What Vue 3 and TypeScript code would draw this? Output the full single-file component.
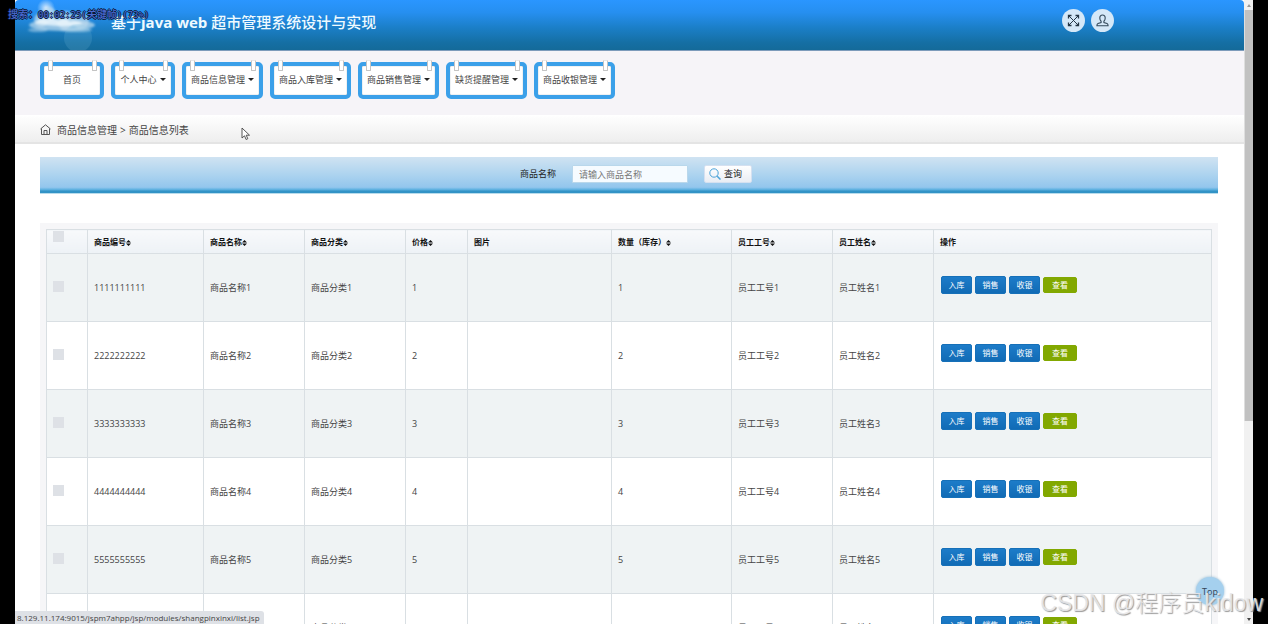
<script setup lang="ts">
import { ref } from 'vue'

interface NavItem { label: string; menu: boolean }
interface Column { label: string; key: string; sortable: boolean }

const nav: NavItem[] = [
  { label: '首页', menu: false },
  { label: '个人中心', menu: true },
  { label: '商品信息管理', menu: true },
  { label: '商品入库管理', menu: true },
  { label: '商品销售管理', menu: true },
  { label: '缺货提醒管理', menu: true },
  { label: '商品收银管理', menu: true },
]

const columns: Column[] = [
  { label: '商品编号', key: 'code', sortable: true },
  { label: '商品名称', key: 'name', sortable: true },
  { label: '商品分类', key: 'kind', sortable: true },
  { label: '价格', key: 'price', sortable: true },
  { label: '图片', key: 'image', sortable: false },
  { label: '数量（库存）', key: 'stock', sortable: true },
  { label: '员工工号', key: 'staff', sortable: true },
  { label: '员工姓名', key: 'person', sortable: true },
]

const rows = [1, 2, 3, 4, 5, 6].map((n) => ({
  id: n,
  code: String(n).repeat(10),
  name: `商品名称${n}`,
  kind: `商品分类${n}`,
  price: String(n),
  image: '',
  stock: String(n),
  staff: `员工工号${n}`,
  person: `员工姓名${n}`,
})) as Array<{ id: number } & Record<string, string | number>>

const actions = ['入库', '销售', '收银']
const keyword = ref('')
</script>

<template>
  <div class="stage">
    <main class="page">
      <header class="header">
        <svg class="cloud" width="90" height="50" viewBox="0 0 90 50" aria-hidden="true">
          <defs>
            <filter id="soft" x="-20%" y="-20%" width="140%" height="140%"><feGaussianBlur stdDeviation="1.2" /></filter>
            <radialGradient id="glow"><stop offset="0" stop-color="#fff" /><stop offset="1" stop-color="#fff" stop-opacity="0" /></radialGradient>
          </defs>
          <circle cx="25" cy="8" r="9" fill="url(#glow)" opacity=".8" />
          <g filter="url(#soft)" fill="#c3def0">
            <ellipse cx="41" cy="25" rx="33" ry="6" opacity=".7" />
            <circle cx="20" cy="20" r="7" opacity=".7" />
            <circle cx="28" cy="14" r="7" opacity=".7" />
            <circle cx="44" cy="20" r="9" opacity=".7" />
            <circle cx="60" cy="21" r="8" opacity=".6" />
            <ellipse cx="17" cy="30" rx="10" ry="2" opacity=".5" />
            <ellipse cx="55" cy="30" rx="16" ry="2" opacity=".6" />
            <path d="M14 23q6-7 12-3 6-5 11 1 7-5 12 1 7-3 13 2-24 5-48-1z" fill="#edf7fc" opacity=".8" />
          </g>
          <circle cx="57" cy="38" r="14" fill="#8fd0e8" opacity=".16" />
        </svg>
        <h1>基于<span>java web</span> 超市管理系统设计与实现</h1>
        <div class="tools">
          <button type="button" aria-label="全屏">
            <svg width="13" height="13" viewBox="0 0 13 13" fill="none" stroke="#263746" stroke-width="1">
              <path d="M2 2l9 9M11 2l-9 9" />
              <path d="M1.500 4.500v-3h3M8.500 1.500h3v3M11.500 8.500v3h-3M4.500 11.500h-3v-3" stroke-width="1.300" />
            </svg>
          </button>
          <button type="button" aria-label="用户">
            <svg width="13" height="13" viewBox="0 0 13 13" fill="none" stroke="#33495b" stroke-width="1.100">
              <path d="M6.500 1C4.700 1 3.800 2.200 3.800 4c0 1.500.5 2.700 1.300 3.300v1.200L2 9.600c-.8.300-1.100.8-1.100 2.100h11.200c0-1.300-.3-1.800-1.100-2.100L7.900 8.500V7.300C8.700 6.700 9.200 5.500 9.200 4c0-1.800-.9-3-2.700-3z" />
            </svg>
          </button>
        </div>
      </header>

      <nav class="nav">
        <button v-for="item in nav" :key="item.label" type="button" class="tab" :class="{ short: item.label.length < 5 }">
          {{ item.label }}<i v-if="item.menu" class="caret"></i>
        </button>
      </nav>

      <div class="crumbs">
        <svg width="11" height="11" viewBox="0 0 11 11" fill="none" stroke="#555" aria-hidden="true">
          <path d="M.5 5L5.500.8 10.500 5M1.500 4.500v6h8v-6M4 10.500V6.500h3v4" />
        </svg>
        <a href="#">商品信息管理</a><span class="sep">&gt;</span><span>商品信息列表</span>
      </div>

      <form class="search" @submit.prevent>
        <label for="goods">商品名称</label>
        <input id="goods" v-model="keyword" type="text" placeholder="请输入商品名称">
        <button type="submit">
          <svg width="12" height="12" viewBox="0 0 12 12" fill="none" stroke="#4ba3d8" aria-hidden="true">
            <circle cx="5" cy="5" r="4.200" /><path d="M8.200 8.200l3.300 3.300" stroke-width="1.500" />
          </svg>
          查询
        </button>
      </form>

      <section class="panel">
        <table>
          <colgroup>
            <col class="w-check"><col class="w-code"><col class="w-text"><col class="w-text"><col class="w-price">
            <col class="w-image"><col class="w-stock"><col class="w-text"><col class="w-text"><col>
          </colgroup>
          <thead>
            <tr>
              <th class="pick"><input type="checkbox" aria-label="全选"></th>
              <th v-for="c in columns" :key="c.key">
                {{ c.label }}<svg v-if="c.sortable" width="5" height="6" viewBox="0 0 5 6" fill="#111"><path d="M0 2.500L2.500 0 5 2.500zM0 3.500h5L2.500 6z" /></svg>
              </th>
              <th>操作</th>
            </tr>
          </thead>
          <tbody>
            <tr v-for="row in rows" :key="row.id">
              <td class="pick"><input type="checkbox" :aria-label="`选择${row.name}`"></td>
              <td v-for="c in columns" :key="c.key">{{ row[c.key] }}</td>
              <td class="last">
                <div class="actions">
                  <button v-for="a in actions" :key="a" type="button">{{ a }}</button>
                  <button type="button" class="view">查看</button>
                </div>
              </td>
            </tr>
          </tbody>
        </table>
      </section>
    </main>

    <div class="scroll" aria-hidden="true">
      <i class="arrow up"></i>
      <div class="track"><div class="thumb"></div></div>
      <i class="arrow down"></i>
    </div>

    <div class="stamp">搜索：<span>00:02:25(</span>关键帧<span>)(73%)</span></div>
    <svg class="pointer" width="10" height="14" viewBox="0 0 10 14" aria-hidden="true">
      <path d="M1 1v10l2.500-2.200 1.600 3.700 1.700-.8-1.600-3.500H8.500z" fill="#fff" stroke="#444" stroke-width=".9" />
    </svg>
    <div class="status">8.129.11.174:9015/jspm7ahpp/jsp/modules/shangpinxinxi/list.jsp</div>
    <a href="#" class="top">Top</a>
    <div class="mark">CSDN @程序员kidow</div>
  </div>
</template>

<style>
body { margin: 0; background: #000; }
</style>

<style scoped>
.stage {
  position: relative;
  display: flex;
  height: 100vh;
  padding: 0 15px;
  box-sizing: border-box;
  overflow: hidden;
  background: #000;
  font: 9px/12px "Open Sans", "Noto Sans CJK SC", sans-serif;
  color: #444;
}
.stage * { box-sizing: border-box; }
button, input { font: inherit; color: inherit; margin: 0; }
button { cursor: pointer; }
.page { flex: 1; min-width: 0; overflow: hidden; background: #fff; }

.header {
  display: flex;
  height: 51px;
  padding-right: 130px;
  border-bottom: 1px solid #7d9bbb;
  border-radius: 4px 4px 0 0;
  background: linear-gradient(#2a96ff, #268ff0 25%, #1b7fc8 55%, #156fa4 85%, #146a99);
}
.cloud { margin-left: 6px; flex: none; }
h1 {
  margin: 0;
  padding-top: 12px;
  font-size: 15px;
  line-height: 20px;
  font-weight: 500;
  color: #eefaff;
  white-space: nowrap;
}
h1 span { font-weight: 700; }
.tools { display: flex; gap: 6px; margin: 9px 0 0 auto; }
.tools button {
  display: grid;
  place-items: center;
  width: 23px;
  height: 23px;
  padding: 0;
  border: 0;
  border-radius: 50%;
  background: #d5e8f8;
}

.nav { display: flex; gap: 7px; height: 64px; padding: 11px 25px 0; background: #f6f4f8; }
.tab {
  position: relative;
  display: flex;
  align-items: center;
  justify-content: center;
  width: 81px;
  height: 37px;
  padding: 0 0 2px;
  border: 4px solid #3ba0e9;
  border-radius: 5px;
  background: #fff;
  box-shadow: inset 0 0 1px #5f7484;
  white-space: nowrap;
}
.tab.short { width: 64px; }
.tab::before, .tab::after {
  content: "";
  position: absolute;
  top: -6px;
  width: 3px;
  height: 9px;
  border: 1px solid #c4c4c4;
  border-top-color: #e8e8e8;
  border-radius: 1px;
  background: #fff;
}
.tab::before { left: 4px; }
.tab::after { right: 3px; }
.caret { margin-left: 3px; border: 3px solid transparent; border-top-color: #222; border-bottom: 0; }

.crumbs {
  display: flex;
  align-items: center;
  height: 29px;
  padding: 2px 25px 0;
  border-bottom: 2px solid #e4e4e4;
  background: linear-gradient(#fff, #eee);
  font-size: 10px;
}
.crumbs a { margin-left: 6px; color: inherit; text-decoration: none; }
.sep { margin: 0 3px; }

.search {
  display: flex;
  align-items: center;
  justify-content: center;
  height: 37px;
  margin: 13px 26px 0 25px;
  padding: 0 0 2px 14px;
  border-bottom: 1px solid #b8dcec;
  background: linear-gradient(#d0e3f2, #acd3ef 50%, #93c6ed 84%, #62b3e2 90%, #3293c6 95%, #3293c6);
  color: #222;
}
.search input {
  width: 116px;
  height: 18px;
  margin: 0 16px;
  padding: 0 6px;
  border: 1px solid #b9d7eb;
  border-radius: 1px;
  background: #f6fbff;
}
.search input::placeholder { color: #777; opacity: 1; }
.search button {
  display: flex;
  align-items: center;
  gap: 3px;
  height: 18px;
  width: 48px;
  padding: 0 4px;
  border: 1px solid #d5e0f0;
  border-radius: 2px;
  background: linear-gradient(#fff, #e9edf4);
  white-space: nowrap;
}
.search svg { flex: none; }

.panel { margin: 29px 26px 0 25px; padding: 6px; background: #f6f6f8; }
table { width: 100%; table-layout: fixed; border-collapse: collapse; border: 1px solid #cfd8e0; background: #fff; }
.w-check { width: 41px; }
.w-code { width: 116px; }
.w-text { width: 101px; }
.w-price { width: 62px; }
.w-image { width: 144px; }
.w-stock { width: 120px; }
th, td { padding: 0 6px; border: 1px solid #d9dfe3; text-align: left; white-space: nowrap; }
th { height: 24px; background: linear-gradient(#f8f9fb, #edf2f6); font-size: 8px; color: #111; }
th svg { vertical-align: -1px; }
td { height: 68px; }
td.last { padding-left: 7px; }
tbody tr:nth-child(odd) { background: #eff3f4; }
.pick input {
  display: block;
  appearance: none;
  width: 11px;
  height: 11px;
  background: #dee1e6;
}
td.pick { padding-bottom: 2px; }
th.pick { vertical-align: top; padding-top: 1px; }
.actions { display: flex; align-items: center; gap: 3px; padding-bottom: 5px; }
.actions button {
  width: 31px;
  height: 18px;
  padding: 0;
  border: 1px solid #1670b8;
  border-radius: 2px;
  background: linear-gradient(#1d7cc9, #116bb5);
  color: #fff;
  font-size: 8px;
  line-height: 12px;
}
.actions .view { width: 34px; height: 16px; border-color: #82a800; background: #82a800; }

.scroll { display: flex; flex-direction: column; width: 9px; background: #f1f1f1; }
.track { flex: 1; }
.thumb { height: 68%; background: #c1c1c1; border-left: 1px solid #dedede; }
.arrow { height: 10px; display: grid; place-items: center; }
.arrow::before { content: ""; border: 2px solid transparent; }
.up::before { border-bottom: 3px solid #999; border-top: 0; }
.down::before { border-top: 3px solid #444; border-bottom: 0; }

.stamp {
  position: absolute;
  left: 8px;
  top: 7px;
  font: 500 10px/14px "Noto Sans CJK SC", sans-serif;
  color: #4a6ad0;
  text-shadow: 1px 0 #0a1a38, -1px 0 #0a1a38, 0 1px #0a1a38, 0 -1px #0a1a38;
  white-space: nowrap;
}
.stamp span { font: 9px/14px "DejaVu Sans Mono", monospace; }
.pointer { position: absolute; left: 241px; top: 127px; }
.status {
  position: absolute;
  left: 15px;
  bottom: 0;
  height: 13px;
  padding: 0 4px 0 2px;
  border-radius: 0 3px 0 0;
  background: #dee1e6;
  font-size: 8px;
  line-height: 14px;
}
.top {
  position: absolute;
  right: 44px;
  bottom: 19px;
  width: 28px;
  height: 28px;
  border-radius: 50%;
  background: #a5d0ee;
  box-shadow: 0 0 3px #8ab4d0;
  color: #345;
  line-height: 30px;
  text-align: center;
  text-decoration: none;
}
.mark {
  position: absolute;
  right: 5px;
  bottom: 7px;
  font: 300 23px/28px "Liberation Sans", "Noto Sans CJK SC", sans-serif;
  color: rgba(232, 232, 234, .9);
  text-shadow: 1px 1px 1px #999;
  white-space: nowrap;
}
</style>
